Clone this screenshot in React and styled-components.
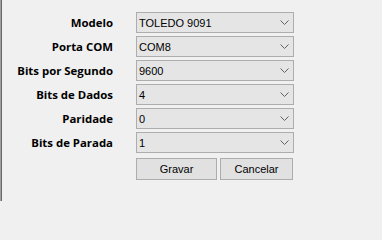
import React from 'react';
import styled, { createGlobalStyle } from 'styled-components';

const GlobalStyle = createGlobalStyle`
  html, body {
    margin: 0;
    padding: 0;
    background: #f0f0f0;
  }
`;

const Window = styled.div`
  width: 382px;
  height: 201px;
  box-sizing: border-box;
  background: #f0f0f0;
  border-left: 1px solid #a0a0a0;
  box-shadow: inset 1px 0 0 #696969;
  padding: 12px 0 0 1px;
`;

const Form = styled.div`
  display: grid;
  grid-template-columns: 111px 158px;
  grid-auto-rows: 21px;
  column-gap: 23px;
  row-gap: 3px;
`;

const Label = styled.label`
  display: flex;
  align-items: center;
  justify-content: flex-end;
  font-family: "Open Sans", "Noto Sans", sans-serif;
  font-weight: 700;
  font-size: 11.4px;
  color: #000;
  white-space: nowrap;
`;

const Combo = styled.div`
  display: flex;
  align-items: center;
  justify-content: space-between;
  box-sizing: border-box;
  background: #e5e5e5;
  border: 1px solid #adadad;
  padding: 0 3px 0 2px;
  font-family: "Liberation Sans", Arial, sans-serif;
  font-size: 11px;
  color: #000;
`;

const Chevron = styled.svg`
  width: 9px;
  height: 5px;
  margin-right: 1px;
`;

const Buttons = styled.div`
  grid-column: 2;
  display: flex;
  gap: 3px;
  margin-top: 2px;
  height: 22px;
`;

const Button = styled.button`
  box-sizing: border-box;
  width: ${p => p.$w}px;
  height: 22px;
  background: #e1e1e1;
  border: 1px solid #adadad;
  border-radius: 0;
  padding: 0;
  font-family: "Liberation Sans", Arial, sans-serif;
  font-size: 11px;
  color: #000;
`;

const fields = [
  ['Modelo', 'TOLEDO 9091'],
  ['Porta COM', 'COM8'],
  ['Bits por Segundo', '9600'],
  ['Bits de Dados', '4'],
  ['Paridade', '0'],
  ['Bits de Parada', '1'],
];

const Select = ({ value }) => (
  <Combo>
    <span>{value}</span>
    <Chevron viewBox="0 0 9 5">
      <polyline points="0.5,0.5 4.5,4.5 8.5,0.5" fill="none" stroke="#606060" strokeWidth="1" />
    </Chevron>
  </Combo>
);

export default function App() {
  return (
    <Window>
      <GlobalStyle />
      <Form>
        {fields.map(([label, value]) => (
          <React.Fragment key={label}>
            <Label>{label}</Label>
            <Select value={value} />
          </React.Fragment>
        ))}
        <Buttons>
          <Button $w={81}>Gravar</Button>
          <Button $w={73}>Cancelar</Button>
        </Buttons>
      </Form>
    </Window>
  );
}
